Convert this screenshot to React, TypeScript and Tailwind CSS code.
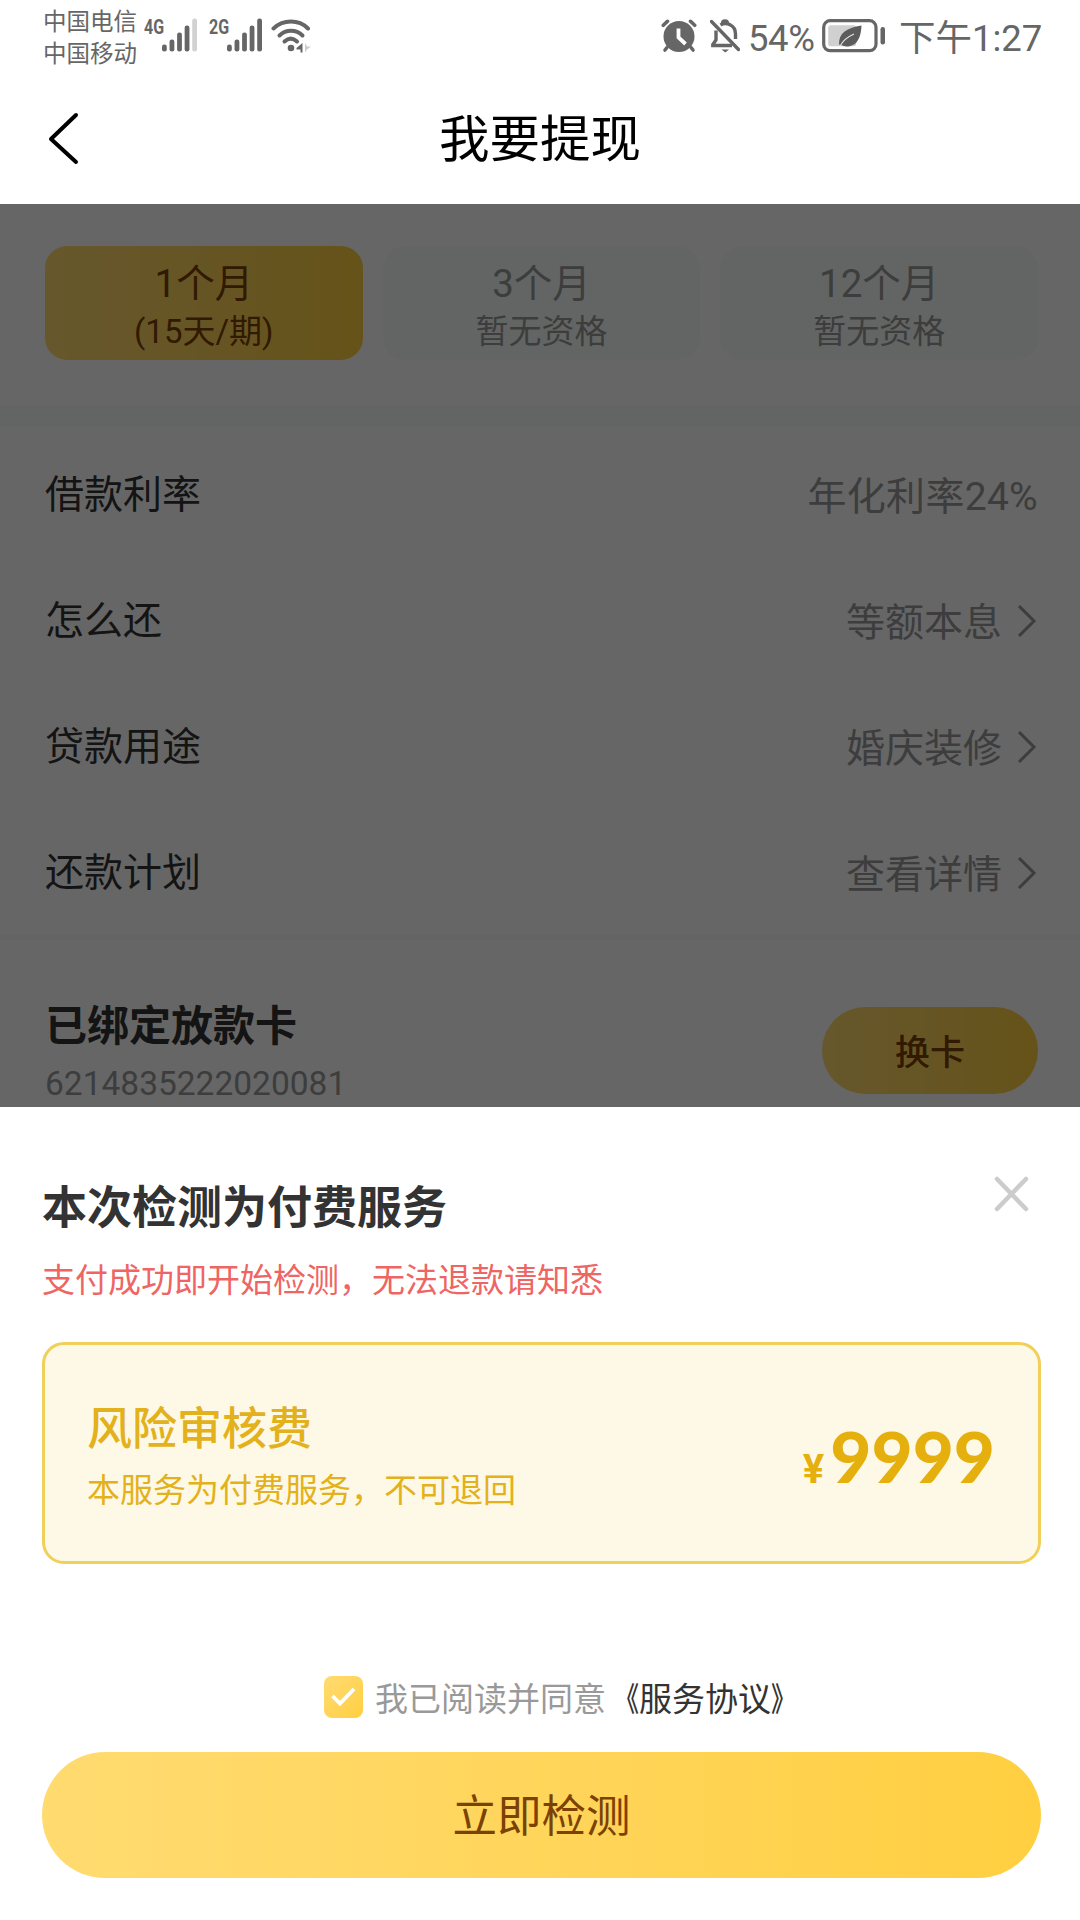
import React from "react";

const TABS = [
  { title: "1个月", sub: "(15天/期)", active: true },
  { title: "3个月", sub: "暂无资格", active: false },
  { title: "12个月", sub: "暂无资格", active: false },
];

const ROWS = [
  { label: "借款利率", value: "年化利率24%", arrow: false },
  { label: "怎么还", value: "等额本息", arrow: true },
  { label: "贷款用途", value: "婚庆装修", arrow: true },
  { label: "还款计划", value: "查看详情", arrow: true },
];

function Bars({ lastDim }: { lastDim: boolean }) {
  const heights = [7, 12, 19, 26, 33];
  return (
    <svg width="35" height="34" viewBox="0 0 35 34">
      {heights.map((h, i) => (
        <rect key={i} x={i * 7.55} y={33.5 - h} width="4.8" height={h} rx="2.2" fill={lastDim && i === 4 ? "#d2d2d2" : "#666"} />
      ))}
    </svg>
  );
}

function Wifi() {
  return (
    <svg width="42" height="36" viewBox="0 0 42 36" fill="none" stroke="#666" strokeWidth="4" strokeLinecap="round">
      <path d="M2.5 9.5C12.5 .3 27.5 .3 37 9.5" />
      <path d="M8.5 16.5C15 10.3 25 10.3 31.5 16.5" />
      <path d="M13.5 22.5C17.5 18.7 22 18.7 26 22.5" />
      <circle cx="20" cy="29" r="3.3" fill="#666" stroke="none" />
      <path d="M31.5 24v9.5h-2v-3h-4v-1.500z" fill="#666" stroke="none" />
      <path d="M34 24v9.500l2-3 4-3-4 0z" fill="#ccc" stroke="none" />
    </svg>
  );
}

function Alarm() {
  return (
    <svg width="36" height="34" viewBox="0 0 36 34" fill="none" strokeLinecap="round">
      <circle cx="18" cy="17.5" r="15.5" fill="#666" />
      <path d="M2.3 6.3 6.5 2.3M33.7 6.3 29.5 2.3" stroke="#666" strokeWidth="3.6" />
      <path d="M6 28.5 4 31M30 28.5 32 31" stroke="#666" strokeWidth="3.6" />
      <path d="M17.5 9.5V18.5L24.5 25" stroke="#fff" strokeWidth="3.8" strokeLinecap="butt" />
    </svg>
  );
}

function BellOff() {
  return (
    <svg width="30" height="34" viewBox="0 0 30 34" fill="none" stroke="#666" strokeWidth="3.4">
      <path d="M6 11.5V21L2.8 25.5V26.5H22" />
      <path d="M10.5 6C16 2.5 25.5 6 25.5 15V20" />
      <path d="M12.5 4.5C12.5 1 17.5 1 17.5 4.5" />
      <path d="M1.5 2.5 28.5 30.5" strokeLinecap="round" />
      <path d="M11.5 30.5h7.5l-3.7 3z" fill="#666" stroke="none" />
    </svg>
  );
}

function Battery() {
  return (
    <svg width="64" height="34" viewBox="0 0 64 34" fill="none">
      <rect x="1.7" y="1.7" width="52.3" height="30" rx="6.5" stroke="#666" strokeWidth="3.2" />
      <rect x="6.2" y="6.2" width="28" height="21" rx="2.5" fill="#d0d0d0" />
      <path d="M17 25.5C16.5 14.5 24 9 39.5 6.5C39 18 35.5 27.5 24.5 27.5C22.5 27.5 21 27 20 26.3Z" fill="#5c5c5c" />
      <path d="M18.5 26.5C21 21.5 26.5 17.5 32 15" stroke="#e4e4e4" strokeWidth="1.1" />
      <rect x="58.5" y="8" width="4.5" height="17.5" rx="2.2" fill="#666" />
    </svg>
  );
}

export default function App() {
  return (
    <div className="relative flex h-[1920px] w-[1080px] flex-col overflow-hidden bg-white font-['Roboto','Noto_Sans_CJK_SC',sans-serif]">
      <div className="flex h-[76px] shrink-0 items-start justify-between text-[#666]">
        <div className="flex pl-[43px] pt-[5px]">
          <div className="mt-[1px] w-[98px] text-[23.5px] leading-[32px]">
            <div>中国电信</div>
            <div>中国移动</div>
          </div>
          <span className="ml-[3px] mt-[11px] w-[18px] origin-left scale-x-[0.8] whitespace-nowrap text-[20px] font-bold leading-[22px]">4G</span>
          <div className="mt-[13px]"><Bars lastDim /></div>
          <span className="ml-[12px] mt-[11px] w-[18px] origin-left scale-x-[0.8] whitespace-nowrap text-[20px] font-bold leading-[22px]">2G</span>
          <div className="mt-[13px]"><Bars lastDim={false} /></div>
          <div className="ml-[9px] mt-[14px]"><Wifi /></div>
        </div>
        <div className="flex pr-[37px] pt-[19px] text-[36px] leading-[38px]">
          <Alarm />
          <div className="ml-[13px]"><BellOff /></div>
          <span className="ml-[8px] mt-[1px] w-[74px] text-[36.5px] tracking-[-0.4px]">54%</span>
          <Battery />
          <span className="ml-[13px] mt-[1px] w-[144px] whitespace-nowrap text-[36.5px]">下午1:27</span>
        </div>
      </div>

      <header className="grid h-[128px] shrink-0 grid-cols-[1fr_auto_1fr] items-center">
        <svg className="mb-[4px] ml-[47px]" width="34" height="54" viewBox="0 0 34 54" fill="none" stroke="#000" strokeWidth="4" strokeLinecap="round" strokeLinejoin="round">
          <path d="M29 4 4 28 29 51" />
        </svg>
        <h1 className="mb-[1px] text-[50.5px] leading-[60px] text-black">我要提现</h1>
      </header>

      <div className="relative h-[903px] shrink-0 overflow-hidden text-[#333]">
        <div className="flex h-[201px] gap-[20px] pl-[45px] pr-[42px] pt-[42px]">
          {TABS.map((t) => (
            <div
              key={t.title}
              className={
                "flex h-[114px] flex-1 flex-col items-center rounded-[22px] pt-[13px] " +
                (t.active ? "bg-linear-to-r from-[#ffdb70] to-[#ffcf40] text-[#7b4204]" : "bg-[#f8fcfa] text-[#999]")
              }
            >
              <div className="text-[38.5px] leading-[50px]">{t.title}</div>
              <div className="text-[33px] leading-[46px]">{t.sub}</div>
            </div>
          ))}
        </div>
        <div className="h-[22px] bg-[#f8fcfa]" />
        <div className="h-[508px] pt-[2px]">
          {ROWS.map((r) => (
            <div key={r.label} className="flex h-[126px] items-center justify-between pl-[45px] pr-[42px] pt-[6px] text-[39px]">
              <span>{r.label}</span>
              <span className={"flex items-center pt-[4px] text-[#999] " + (r.arrow ? "" : "tracking-[0.3px]")}>
                {r.value}
                {r.arrow && (
                  <svg className="mb-[4px] ml-[15px]" width="21" height="36" viewBox="0 0 21 36" fill="none" stroke="#999" strokeWidth="3">
                    <path d="M2 3 17 18 2 33" />
                  </svg>
                )}
              </span>
            </div>
          ))}
        </div>
        <div className="h-[5px] bg-[#f8fcfa]" />
        <div className="flex justify-between pl-[45px] pr-[42px] pt-[61px]">
          <div className="-mt-[2px]">
            <div className="text-[42px] font-bold leading-[56px]">已绑定放款卡</div>
            <div className="mt-[6px] text-[33.5px] leading-[46px] text-[#999]">6214835222020081</div>
          </div>
          <button className="mt-[6px] flex h-[87px] w-[216px] items-center justify-center rounded-full bg-linear-to-r from-[#ffdb70] to-[#ffcf40] pt-[7px] text-[35px] font-medium text-[#7b4204]">
            换卡
          </button>
        </div>
        <div className="absolute inset-0 bg-black/60" />
      </div>

      <section className="flex flex-1 flex-col bg-white px-[42px] text-[#333]">
        <div className="flex items-start justify-between pt-[70px]">
          <h2 className="text-[45px] font-bold leading-[64px]">本次检测为付费服务</h2>
          <svg className="-mt-[2px] mr-[7px]" width="38" height="38" viewBox="0 0 38 38" stroke="#ccc" strokeWidth="4.5" strokeLinecap="round">
            <path d="M4 4 33 34M33 4 4 34" />
          </svg>
        </div>
        <p className="mt-[17px] text-[33px] leading-[46px] text-[#ee6563]">支付成功即开始检测，无法退款请知悉</p>
        <div className="mt-[38px] flex h-[222px] w-[999px] shrink-0 items-center justify-between rounded-[22px] border-[3px] border-[#f0cf5a] bg-[#fef9e6] pl-[42px] pr-[43px] text-[#e3b11b]">
          <div className="pt-[10px]">
            <div className="text-[45px] font-medium leading-[66px]">风险审核费</div>
            <div className="-mt-[1px] text-[33px] leading-[58px]">本服务为付费服务，不可退回</div>
          </div>
          <div className="flex items-baseline pt-[10px] font-bold text-[#e5b00e]">
            <span className="text-[40px]">¥</span>
            <span className="ml-[6px] font-['Lato',sans-serif] text-[71px] font-black leading-[80px]">9999</span>
          </div>
        </div>
        <div className="mt-[112px] flex h-[42px] items-center pl-[282px] text-[33px]">
          <span className="flex h-[42px] w-[39px] items-center justify-center rounded-[8px] bg-linear-to-br from-[#ffdb70] to-[#ffcf40]">
            <svg width="25" height="20" viewBox="0 0 25 20" fill="none" stroke="#fff" strokeWidth="3.8">
              <path d="M1.5 9 9 16.5 23 2" />
            </svg>
          </span>
          <span className="ml-[12px] mt-[6px] whitespace-nowrap text-[#999]">
            我已阅读并同意
            <span className="text-[#333]">
              <span className="inline-block origin-right scale-x-[0.75] font-medium">《</span>服务协议<span className="inline-block origin-left scale-x-[0.75] font-medium">》</span>
            </span>
          </span>
        </div>
        <button className="mt-[34px] flex h-[126px] w-[999px] shrink-0 items-center justify-center rounded-full bg-linear-to-r from-[#ffdb70] to-[#ffcf40] pt-[4px] text-[44.5px] text-[#7b4204]">
          立即检测
        </button>
      </section>
    </div>
  );
}
